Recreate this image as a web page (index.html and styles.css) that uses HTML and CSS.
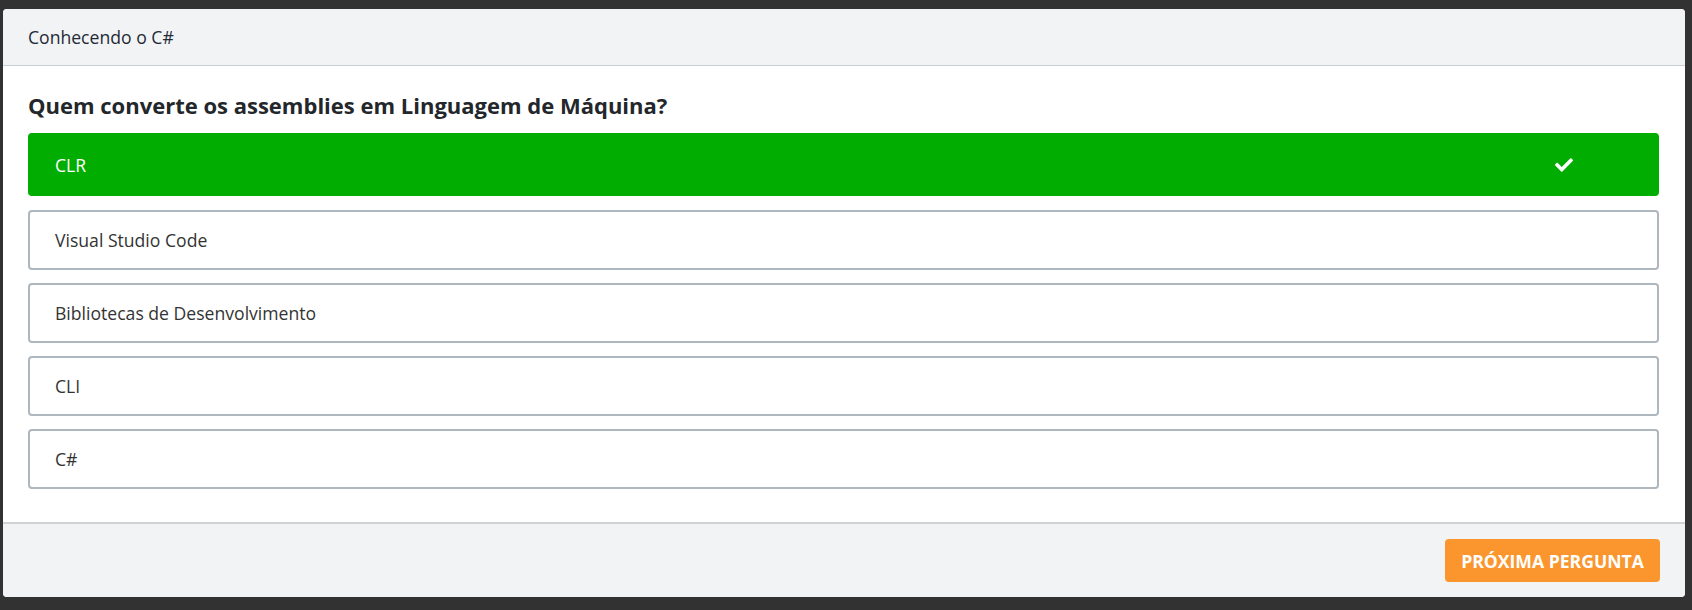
FILE: index.html
```html
<!DOCTYPE html>
<html lang="pt">
<head>
<meta charset="utf-8">
<title>Conhecendo o C#</title>
<link rel="stylesheet" href="styles.css">
</head>
<body>
<div class="page">
  <div class="card">
    <div class="card-header">Conhecendo o C#</div>
    <div class="card-body">
      <h2 class="question">Quem converte os assemblies em Linguagem de Máquina?</h2>
      <ul class="options">
        <li class="option correct">
          <span>CLR</span>
          <svg class="check" viewBox="0 0 512 512" width="18" height="18" aria-hidden="true"><path fill="#fff" d="M173.9 439.4 7.5 273c-10-10-10-26.2 0-36.2l36.2-36.2c10-10 26.2-10 36.2 0L192 312.7 432.1 72.6c10-10 26.2-10 36.2 0l36.2 36.2c10 10 10 26.2 0 36.2L210.1 439.4c-10 10-26.2 10-36.2 0z"/></svg>
        </li>
        <li class="option">Visual Studio Code</li>
        <li class="option">Bibliotecas de Desenvolvimento</li>
        <li class="option">CLI</li>
        <li class="option">C#</li>
      </ul>
    </div>
    <div class="card-footer">
      <button class="btn-next">Próxima pergunta</button>
    </div>
  </div>
</div>
</body>
</html>
```
FILE: styles.css
```css
* { box-sizing: border-box; }
html, body { margin: 0; padding: 0; }
body {
  background: #323232;
  font-family: "Open Sans", "Noto Sans", sans-serif;
  width: 1692px;
  height: 610px;
  overflow: hidden;
}
.page {
  padding: 9px 7px 13px 3px;
}
.card {
  background: #fff;
  border-radius: 4px;
  overflow: hidden;
  height: 588px;
  display: flex;
  flex-direction: column;
}
.card-header {
  background: #f2f3f5;
  height: 57px;
  border-bottom: 1px solid #c9ced4;
  padding: 0 25px;
  display: flex;
  align-items: center;
  font-size: 17.6px;
  color: #1f2a36;
}
.card-body {
  padding: 24px 26px 0 25px;
  flex: 1;
}
.question {
  margin: 0 0 13px;
  font-size: 22px;
  font-weight: 700;
  line-height: 30px;
  color: #23272b;
}
.options {
  list-style: none;
  margin: 0;
  padding: 0;
  display: flex;
  flex-direction: column;
  gap: 13px;
}
.option {
  height: 60px;
  border: 2px solid #aeb6be;
  border-radius: 4px;
  padding: 0 25px;
  display: flex;
  align-items: center;
  font-size: 17.6px;
  color: #333;
}
.option.correct {
  height: 63px;
  margin-bottom: 1px;
  background: #00ad00;
  border-color: #00ad00;
  color: #fff;
  justify-content: space-between;
  padding-right: 84px;
}
.check { display: block; }
.card-footer {
  background: #f2f3f5;
  border-top: 2px solid #d0d3d6;
  height: 75px;
  display: flex;
  justify-content: flex-end;
  align-items: flex-start;
  padding: 15px 25px 0;
}
.btn-next {
  height: 43px;
  width: 215px;
  border: none;
  border-radius: 4px;
  background: #fa962d;
  color: #fff;
  font-family: "Open Sans", "Noto Sans", sans-serif;
  font-weight: 700;
  font-size: 17.6px;
  text-transform: uppercase;
  padding: 0;
}
```
